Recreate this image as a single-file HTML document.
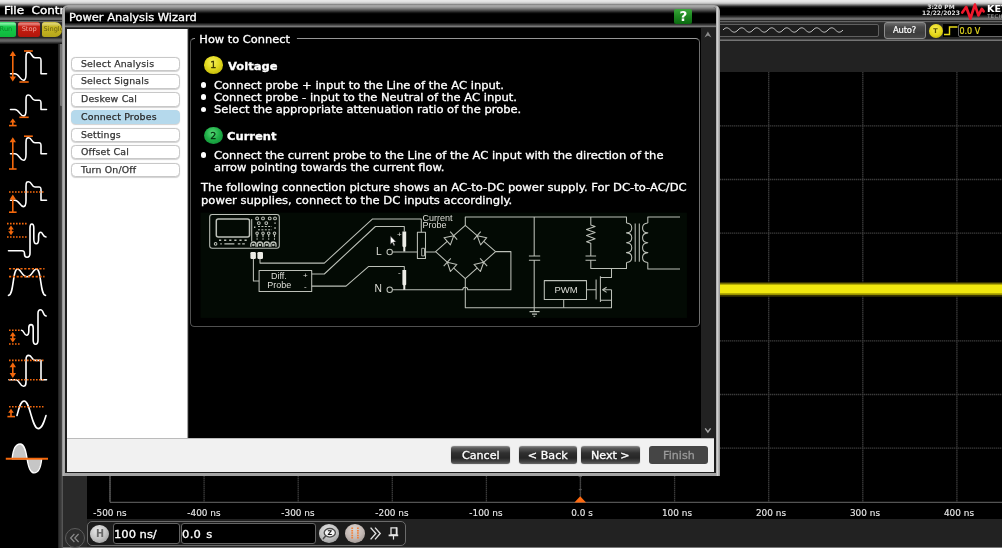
<!DOCTYPE html>
<html>
<head>
<meta charset="utf-8">
<title>Power Analysis Wizard</title>
<style>
html,body{margin:0;padding:0;}
body{width:1002px;height:548px;overflow:hidden;background:#000;position:relative;font-family:"DejaVu Sans","Liberation Sans",sans-serif;color:#fff;}
.abs{position:absolute;}
#app{position:absolute;left:0;top:0;width:1002px;height:548px;overflow:hidden;background:#000;filter:blur(0.55px);}
/* top chrome */
#topstrip{left:0;top:0;width:1002px;height:8px;background:linear-gradient(#ebebeb 0,#e0e0e0 2px,#bcbcbc 3.5px,#707070 5px,#262626 6.5px,#000 8px);}
#menubar{left:0;top:8px;width:1002px;height:13px;background:linear-gradient(#000 0,#000 6.5px,#2c2c2c 8.5px,#5e5e5e 10px,#7a7a7a 11px,#6a6a6a 11.6px,#2a2a2a 12.2px,#2a2a2a 13px);}
#menutext{-webkit-text-stroke:0.35px #fff;left:4px;top:3.8px;font-size:11px;transform:scaleX(1.087);transform-origin:0 0;line-height:14px;white-space:pre;color:#fff;}
#toolbar{left:0;top:21px;width:1002px;height:20.4px;background:linear-gradient(#5c5c5c 0,#6a6a6a 0.8px,#2c2c2c 1.6px,#262626 17px,#2a2a2a 18.2px,#747474 18.8px,#747474 19.8px,#333 20.4px);}
#subbar{left:62px;top:40px;width:940px;height:32px;background:#222;}
.tbtn{top:22.4px;height:15px;border-radius:2.5px;font-size:6.6px;line-height:15.4px;text-align:center;}
/* sidebar */
#sidebar{left:0;top:43px;width:59px;height:505px;background:#000;}
#sideedge{left:58.3px;top:41px;width:4.4px;height:507px;background:linear-gradient(90deg,#1c1c1c 0,#343434 1.5px,#3a3a3a 3px,#555 4.4px);}
/* plot */
#plot{left:87px;top:72px;width:915px;height:448px;background:#000;}
#leftpad{left:62px;top:40px;width:25px;height:508px;background:#2a2a2a;}
#bottombar{left:87px;top:519.3px;width:915px;height:28.7px;background:#222;}
.xl{-webkit-text-stroke:0.12px #e8e8e8;top:507px;width:60px;margin-left:-30.4px;text-align:center;font-size:8.2px;line-height:12px;color:#e8e8e8;transform:scaleX(1.087);}
/* dialog */
#dlgframe{left:62.3px;top:4.8px;width:657.4px;height:470.8px;border-radius:6px 6px 0 0;background:linear-gradient(90deg,#8c8c8c 0,#b0b0b0 1.5px,#a4a4a4 3px,#a4a4a4 654px,#d0d0d0 655.5px,#9a9a9a 657.4px);}
#dlgdark{left:65.2px;top:6.6px;width:651.3px;height:466.6px;border-radius:3px 3px 0 0;background:#1e1e1e;}
#dlg{left:63px;top:5px;width:656px;height:470px;}
#dlgtitle{left:2.2px;top:1.6px;width:651.3px;height:21.8px;background:linear-gradient(#9c9c9c 0,#8a8a8a 1px,#4a4a4a 3.5px,#0a0a0a 6px,#000 7px,#000 15.5px,#3a3a3a 17.6px,#7c7c7c 19.6px,#6e6e6e 20.2px,#1a1a1a 20.6px,#1a1a1a 21.8px);border-radius:3px 3px 0 0;}
#dlgtitletext{-webkit-text-stroke:0.3px #fff;left:6.1px;top:5.2px;font-size:10.5px;transform:scaleX(1.087);transform-origin:0 0;line-height:14px;color:#fff;white-space:nowrap;}
#dlgline{display:none;}
#white{left:4.3px;top:23.7px;width:119.7px;height:409.7px;background:#fff;border-right:1.6px solid #a8a8a8;}
#content{left:126px;top:23.4px;width:525.2px;height:410px;background:#000;}
#btnbar{left:4.3px;top:433px;width:646.9px;height:33.5px;background:#f1f1f1;border-top:1px solid #bbb;box-sizing:border-box;}
.nav{left:8.4px;width:108.3px;height:14.3px;border:1px solid #c8c8c8;border-radius:4.5px;background:#fff;color:#333;-webkit-text-stroke:0.25px #333;font-size:9.4px;letter-spacing:0.18px;line-height:12.3px;padding-left:8.6px;box-sizing:border-box;white-space:nowrap;box-shadow:0 0.5px 1px rgba(0,0,0,0.18);}
.nav.sel{background:#b5d9ec;border-color:#b5d9ec;color:#222;}
.wbtn{top:7.2px;width:59.3px;height:18px;border-radius:3px;background:linear-gradient(#909090 0,#5c5c5c 2px,#303030 7px,#262626 12px,#484848 16px,#6a6a6a 18px);color:#fff;font-size:10.5px;line-height:18.8px;text-align:center;box-shadow:0 0 1px #777;}
.wbtn span{display:inline-block;transform:scaleX(1.06);-webkit-text-stroke:0.3px currentColor;}
.wbtn.dis{background:#454545;color:#9a9a9a;box-shadow:none;}
.txt{-webkit-text-stroke:0.3px #fff;font-size:10.5px;transform:scaleX(1.096);transform-origin:0 0;line-height:12.3px;color:#fff;white-space:nowrap;}
.hf{top:523.3px;height:20.5px;box-sizing:border-box;border:1px solid #646464;border-radius:3px;background:#000;white-space:nowrap;}
.hf span{-webkit-text-stroke:0.3px #fff;position:absolute;left:-0.2px;top:1.3px;color:#fff;font-size:11px;line-height:18.5px;transform:scaleX(1.045);transform-origin:0 0;}
.bul{margin:-0.3px;width:5.6px;height:5.6px;border-radius:50%;background:#fff;}
</style>
</head>
<body>
<div id="app">
  <!-- PLOT -->
  <div id="plot" class="abs"></div>
<svg class="abs" id="grid" style="left:0;top:0" width="1002" height="548" viewBox="0 0 1002 548">
<g stroke="#3a3a3a" stroke-width="1.3" stroke-dasharray="1.4 0.6" fill="none">
<path d="M110.0 72V502"/>
<path d="M204.1 72V502"/>
<path d="M298.2 72V502"/>
<path d="M392.3 72V502"/>
<path d="M486.4 72V502"/>
<path d="M580.5 72V502"/>
<path d="M674.6 72V502"/>
<path d="M768.7 72V502"/>
<path d="M862.8 72V502"/>
<path d="M956.9 72V502"/>
<path d="M110 125.8H1002"/>
<path d="M110 179.5H1002"/>
<path d="M110 233.2H1002"/>
<path d="M110 287.0H1002"/>
<path d="M110 340.8H1002"/>
<path d="M110 394.5H1002"/>
<path d="M110 448.2H1002"/>
</g>
<path d="M110 72V502.3H1002" stroke="#686868" stroke-width="1" fill="none"/>
<path d="M87 71.5H1002" stroke="#444" stroke-width="1" fill="none"/>
<rect x="110" y="282.1" width="892" height="14.6" fill="#3a3600"/>
<rect x="110" y="283.4" width="892" height="11.6" fill="#9a9200"/>
<rect x="110" y="284.7" width="892" height="8.6" fill="#f0e70e"/>
<path d="M580.2 496.3 L586 502.4 H574.4Z" fill="#ff6a10"/>
<path d="M580.3 476V496" stroke="#444" stroke-width="1"/><path d="M578.6 476.6H582M578.8 489.6H581.8" stroke="#555" stroke-width="1"/>
</svg>
  <div class="abs xl" style="left:110.0px">-500 ns</div>
  <div class="abs xl" style="left:204.1px">-400 ns</div>
  <div class="abs xl" style="left:298.2px">-300 ns</div>
  <div class="abs xl" style="left:392.3px">-200 ns</div>
  <div class="abs xl" style="left:486.4px">-100 ns</div>
  <div class="abs xl" style="left:582.0px">0.0 s</div>
  <div class="abs xl" style="left:677.2px">100 ns</div>
  <div class="abs xl" style="left:771.3px">200 ns</div>
  <div class="abs xl" style="left:865.4px">300 ns</div>
  <div class="abs xl" style="left:959.5px">400 ns</div>
  <div id="leftpad" class="abs"></div>
  <div id="subbar" class="abs"></div>
  <div id="bottombar" class="abs"></div>
  <div class="abs" style="left:60px;top:546.6px;width:942px;height:1.4px;background:#7a7a7a;"></div>
  <div class="abs" id="hbox" style="left:86.6px;top:520.8px;width:319.4px;height:25.6px;box-sizing:border-box;border:1.3px solid #6a6a6a;border-radius:5px;background:#1c1c1c;"></div>
  <div class="abs" id="hcirc" style="left:90.4px;top:524.6px;width:19px;height:18.4px;border-radius:50%;background:radial-gradient(circle at 40% 30%,#e8e8e8 0,#c4c4c4 50%,#8c8c8c 100%);color:#6a6a6a;font-size:9.6px;font-weight:bold;line-height:18.6px;text-align:center;">H</div>
  <div class="abs hf" style="left:113.4px;width:66.4px;"><span>100 ns/</span></div>
  <div class="abs hf" style="left:181.4px;width:134.4px;"><span style="word-spacing:1px;letter-spacing:0.3px">0.0 s</span></div>
  <div class="abs" id="zcirc" style="left:319px;top:524.2px;width:20.2px;height:18.4px;border-radius:50%;background:radial-gradient(circle at 45% 30%,#e0e0e0 0,#c2c2c2 50%,#8a8a8a 100%);"></div>
  <svg class="abs" style="left:319px;top:523px" width="21" height="21" viewBox="0 0 21 21"><ellipse cx="10.8" cy="9.8" rx="5.6" ry="4.3" fill="#f4f4f4" stroke="#4a4a4a" stroke-width="1.3"/><path d="M6.6 13L4.4 15.6" stroke="#4a4a4a" stroke-width="1.5" stroke-linecap="round"/><text x="10.9" y="12.2" font-family="'DejaVu Sans',sans-serif" font-size="6.4px" font-weight="bold" fill="#111" text-anchor="middle">Z</text></svg>
  <div class="abs" id="pcirc" style="left:345.3px;top:524.2px;width:20px;height:18.4px;border-radius:50%;background:radial-gradient(circle at 45% 30%,#dcd4d0 0,#c4bab6 50%,#8e8682 100%);"></div>
  <svg class="abs" style="left:345.3px;top:523px" width="20" height="21" viewBox="0 0 20 21"><path d="M7.2 4.5V16.5M12.9 4.5V16.5" stroke="#f0803a" stroke-width="1.8" stroke-dasharray="1.5 0.9"/></svg>
  <svg class="abs" style="left:368px;top:525px" width="40" height="18" viewBox="0 0 40 18"><path d="M2.6 2.6L7.8 8.5L2.6 14.4M7 2.6L12.2 8.5L7 14.4" fill="none" stroke="#e0e0e0" stroke-width="1.4"/><path d="M23 2.8H28.6V10H23Z" fill="none" stroke="#e4e4e4" stroke-width="1.3"/><path d="M28.6 2.6V10M20.6 10.4H30.2" stroke="#e4e4e4" stroke-width="1.7"/><path d="M25.5 10.4V14.6" stroke="#e4e4e4" stroke-width="1.2"/></svg>
  <div class="abs" id="llcirc" style="left:65px;top:527.6px;width:20px;height:20px;box-sizing:border-box;border-radius:50%;border:1px solid #5c5c5c;background:#2c2c2c;"></div>
  <svg class="abs" style="left:65px;top:527.6px" width="20" height="20" viewBox="0 0 20 20"><path d="M9.4 6L5.6 10L9.4 14M13.6 6L9.8 10L13.6 14" fill="none" stroke="#8a8a8a" stroke-width="1.2"/></svg>
  <!-- SIDEBAR -->
  <div id="sidebar" class="abs"></div>
  <div id="sideedge" class="abs"></div>
  <div class="abs" style="left:60px;top:42.8px;width:2.7px;height:63px;background:#747474;border-radius:1px;"></div>
<svg class="abs" id="icons" style="left:0;top:40px" width="60" height="508" viewBox="0 40 60 508">
<g fill="none" stroke="#fff" stroke-width="1.6" stroke-linecap="round" stroke-linejoin="round">
<path d="M10.5 73.7 H15 C19 73.7 20 80.2 23.5 80.2 C26 80.2 26 77.2 26 74.2 V57.3 C26 52.3 27 52.3 28.5 52.3 C32 52.3 31.5 57.7 35 57.7 H39 C41 57.7 41 58.7 41 60.7 V73.7 H46.5"/>
<path d="M10.5 109.5 H15 C19 109.5 20 115.9 23.5 115.9 C26 115.9 26 112.9 26 109.9 V100 C26 95 27 95 28.5 95 C32 95 31.5 100.2 35 100.2 H39 C41 100.2 41 101.2 41 103.2 V109.5 H46.5"/>
<path d="M10.5 153.7 H15 C19 153.7 20 160.3 23.5 160.3 C26 160.3 26 157.3 26 154.3 V142.8 C26 137.8 27 137.8 28.5 137.8 C32 137.8 31.5 142.8 35 142.8 H39 C41 142.8 41 143.8 41 145.8 V153.7 H46.5"/>
<path d="M10.5 200.2 H15 C19 200.2 20 206.6 23.5 206.6 C26 206.6 26 203.6 26 200.6 V186.7 C26 181.7 27 181.7 28.5 181.7 C32 181.7 31.5 187 35 187 H39 C41 187 41 188 41 190 V200.2 H46.5"/>
<path d="M8.5 250.7 H22 C24.5 250.7 24.5 252 24.5 254 C24.5 256.5 25.5 257.3 27 257.3 C29 257.3 30 256.5 30 253 V228 C30 225 30.5 224 31.8 224 C33.2 224 33.8 225 33.8 228 V239 C33.8 242.5 34.8 243.7 36.3 243.7 C38 243.7 38.6 242.5 38.6 239 V236 C38.6 233 39.4 232.2 40.8 232.2 C42.8 232.2 42.6 237 46 237"/>
<path d="M8.5 295.4 C14 295.4 12.5 269 17.5 269 C21 269 22 276.8 27 276.8 C32 276.8 33 269 36.5 269 C41.5 269 40 295.4 45.5 295.4"/>
<path d="M21.5 330.3 C24 330.3 24 335.2 26.5 335.2 C28.6 335.2 28.8 333 28.8 331 V328 C28.8 325.5 29.6 324.6 31 324.6 C32.6 324.6 33.2 325.5 33.2 328 V340 C33.2 343 34 344.2 35.6 344.2 C37.4 344.2 38 343 38 340 V313.5 C38 310.5 38.8 309.8 40.5 309.8 C44 309.8 42.5 316 46.2 316"/>
<path d="M9 379.8 H16 C19.5 379.8 20 386.3 23.5 386.3 C26 386.3 26 384 26 381 V360 C26 356 27 355.4 28.8 355.4 C32 355.4 31.8 360.4 35 360.4 H41 V379.8 H46.5"/>
<path d="M17 415.5 C19 408 20.5 401 24.2 401 C30 401 32 428.6 38.2 428.6 C42 428.6 44 422 46 415.5"/>
</g>
<path d="M12.15 458.8 C12.9 450.5 15.6 444 20.1 444 C24.7 444 26.1 452 27.1 458.8 C28.1 465.6 29.5 472.9 34.1 472.9 C38.7 472.9 41 466.5 41.7 458.8Z" fill="#c6c6c6" stroke="#fff" stroke-width="1.3" stroke-linejoin="round"/>
<g stroke="#f4680c" stroke-width="1.6" fill="none">
<path d="M12.8 54V79"/><path d="M24 51H32.8"/><path d="M19.4 82H28.7"/>
<path d="M19.4 117.3H28.7"/><path d="M12.8 121V125.5"/><path d="M9 125.6H16.6"/>
<path d="M24 136.2H32.8"/><path d="M12.8 141V169"/><path d="M9 169H16.6"/>
<path d="M9 192H43.5" stroke-dasharray="1.6 1.4"/><path d="M12.8 199V212"/><path d="M9 212.2H16.6"/>
<path d="M7 223.6H27.5" stroke-dasharray="1.6 1.4"/><path d="M7 237H27.5" stroke-dasharray="1.6 1.4"/><path d="M11 228.5V232.5"/>
<path d="M9 268.8H44.5" stroke-dasharray="2.2 1.6"/><path d="M9 276.6H44.5" stroke-dasharray="2.2 1.6"/>
<path d="M9 330.3H20.5" stroke-dasharray="1.6 1.4"/><path d="M9 344H20.5" stroke-dasharray="1.6 1.4"/><path d="M12.8 335V340"/>
<path d="M9 360.4H43.5" stroke-dasharray="1.6 1.4"/><path d="M9 379.8H43.5" stroke-dasharray="1.6 1.4"/><path d="M12.8 366V375"/>
<path d="M9 406.8H43.5" stroke-dasharray="1.6 1.4"/><path d="M11 412V416"/><path d="M7.4 416.6H15"/>
<path d="M5.8 458.8H48" stroke-width="2"/>
</g>
<g fill="#f4680c" stroke="none">
<path d="M12.8 51 L16.0 56 H9.600000000000001Z"/><path d="M12.8 81.6 L16.0 76.6 H9.600000000000001Z"/>
<path d="M12.8 118.6 L15.8 122.6 H9.8Z"/>
<path d="M12.8 137.3 L16.0 142.3 H9.600000000000001Z"/>
<path d="M12.8 194.6 L16.0 199.6 H9.600000000000001Z"/>
<path d="M11 225.6 L13.8 229.6 H8.2Z"/><path d="M11 235.2 L13.8 231.2 H8.2Z"/>
<path d="M12.8 332 L15.8 336.2 H9.8Z"/><path d="M12.8 342.4 L15.8 338.2 H9.8Z"/>
<path d="M12.8 362.2 L16.0 367.2 H9.600000000000001Z"/><path d="M12.8 378 L16.0 373 H9.600000000000001Z"/>
<path d="M11 408.8 L13.8 412.8 H8.2Z"/>
</g>
</svg>
  <!-- TOP -->
  <div id="topstrip" class="abs"></div>
  <div id="menubar" class="abs"></div>
  <div id="menutext" class="abs">File  Control</div>
  <div id="toolbar" class="abs"></div>
  <div class="abs tbtn" style="left:-8px;width:23.7px;background:linear-gradient(#30d060 0,#7cf0a0 1.5px,#58e484 3px,#1cd050 4.2px,#12c444 9px,#10b83c 15px);color:#0a8a2a;">&nbsp;&nbsp;Run</div>
  <div class="abs tbtn" style="left:18px;width:22.4px;background:linear-gradient(#c83428 0,#e47c74 1.5px,#dc6860 3px,#c82418 4.2px,#c01a0e 9px,#b0160c 15px);color:#f0a49c;">Stop</div>
  <div class="abs tbtn" style="left:42.1px;width:20.4px;overflow:hidden;text-align:left;text-indent:1.4px;white-space:nowrap;background:linear-gradient(#c8ba34 0,#dcd270 1.5px,#d4c858 3px,#c8b828 4.2px,#c2b220 9px,#b4a41a 15px);color:#6a6012;border-radius:2.5px 7px 7px 2.5px;">Single</div>
  <div class="abs" style="left:0;top:38.4px;width:62.5px;height:5.2px;background:linear-gradient(#2e2e2e 0,#5c5c5c 1.2px,#646464 2.5px,#555 3.8px,#1c1c1c 5.2px);"></div>
  <!-- right toolbar -->
  <div class="abs" style="left:700px;top:23.6px;width:178.6px;height:13.8px;box-sizing:border-box;border:1.2px solid #606060;background:#1e1e1e;border-radius:2px;"></div>
  <svg class="abs" style="left:722px;top:22px" width="130" height="16" viewBox="0 0 130 16"><path id="sq" d="M1 8 C3.73 5.10 5.77 5.10 8.50 8 C11.23 10.90 13.27 10.90 16.00 8 C18.73 5.10 20.77 5.10 23.50 8 C26.23 10.90 28.27 10.90 31.00 8 C33.73 5.10 35.77 5.10 38.50 8 C41.23 10.90 43.27 10.90 46.00 8 C48.73 5.10 50.77 5.10 53.50 8 C56.23 10.90 58.27 10.90 61.00 8 C63.73 5.10 65.77 5.10 68.50 8 C71.23 10.90 73.27 10.90 76.00 8 C78.73 5.10 80.77 5.10 83.50 8 C86.23 10.90 88.27 10.90 91.00 8 C93.73 5.10 95.77 5.10 98.50 8 C101.23 10.90 103.27 10.90 106.00 8 C108.73 5.10 110.77 5.10 113.50 8 C116.23 10.90 118.27 10.90 121.00 8" fill="none" stroke="#c8c8c8" stroke-width="1"/></svg>
  <div class="abs" id="auto" style="left:883.5px;top:22px;width:42px;height:16.5px;box-sizing:border-box;border:1px solid #8c8c8c;border-radius:3px;background:linear-gradient(#6e6e6e 0,#4a4a4a 4px,#3c3c3c 10px,#484848 15px);color:#fff;-webkit-text-stroke:0.2px #fff;font-size:8.4px;line-height:14px;text-align:center;letter-spacing:-0.2px;">Auto?</div>
  <div class="abs" id="tcirc" style="left:928.5px;top:23.5px;width:14px;height:14px;border-radius:50%;background:radial-gradient(circle at 45% 35%,#f8ee50 0,#e4d618 55%,#b4a808 100%);color:#5a5200;font-size:6.5px;font-weight:bold;line-height:14px;text-align:center;">T</div>
  <div class="abs" style="left:943px;top:24px;width:16px;height:13px;background:#000;"></div>
  <svg class="abs" style="left:943px;top:24px" width="16" height="13" viewBox="0 0 16 13"><path d="M1 10.5H6.5V3H14.5" fill="none" stroke="#e8dc18" stroke-width="1.4"/></svg>
  <div class="abs" style="left:958.4px;top:23.6px;width:50px;height:13.4px;border:1px solid #6a6a6a;border-radius:2px;background:#000;color:#e4d820;-webkit-text-stroke:0.2px #e4d820;font-size:8px;line-height:13px;padding-left:0;box-sizing:border-box;">0.0 V</div>
  <!-- clock + logo -->
  <div class="abs" style="left:911px;top:4.3px;width:60px;text-align:center;font-size:6px;line-height:5.9px;font-weight:bold;color:#e0e0e0;white-space:pre;">3:20 PM
12/22/2023</div>
  <svg class="abs" style="left:958px;top:0" width="30" height="24" viewBox="958 0 30 24"><path d="M962.3 12.6 L966.2 7 L970.4 18.6 L974.9 4.6 L978.4 15.4 L981.8 8.9 L983.6 11.3" fill="none" stroke="#f0182c" stroke-width="2.7" stroke-linejoin="round" stroke-linecap="round"/></svg>
  <div class="abs" style="left:986.6px;top:3.6px;font-size:8.6px;line-height:10px;font-weight:bold;color:#fff;white-space:nowrap;transform:scaleX(1.12);transform-origin:0 0;">KEYSIGHT</div>
  <div class="abs" style="left:987.3px;top:13.2px;font-size:5.2px;line-height:6px;color:#b0b0b0;white-space:nowrap;letter-spacing:0.35px;">TECHNOLOGIES</div>
  <!-- DIALOG -->
  <div id="dlgframe" class="abs"></div>
  <div id="dlgdark" class="abs"></div>
  <div id="dlg" class="abs">
    <div id="dlgtitle" class="abs"></div>
    <div id="dlgtitletext" class="abs">Power Analysis Wizard</div>
    <div id="dlgline" class="abs"></div>
    <div id="white" class="abs"></div>
    <div class="abs nav" style="top:51.5px">Select Analysis</div>
    <div class="abs nav" style="top:69.4px">Select Signals</div>
    <div class="abs nav" style="top:87.3px">Deskew Cal</div>
    <div class="abs nav sel" style="top:104.9px">Connect Probes</div>
    <div class="abs nav" style="top:122.5px">Settings</div>
    <div class="abs nav" style="top:140.2px">Offset Cal</div>
    <div class="abs nav" style="top:158.0px">Turn On/Off</div>
    <div id="content" class="abs">
      <!-- group box; coords relative to content (189,28) -->
      <div class="abs" id="gbox" style="left:0.9px;top:10px;width:510.4px;height:288.6px;border:1.2px solid #505050;border-top-color:#969696;border-right-color:#707070;border-radius:4.5px;box-sizing:border-box;"></div>
      <div class="abs txt" id="gtitle" style="left:6px;top:4px;transform:scaleX(1.084);padding:0 6px 0 4px;background:#000;line-height:14px;">How to Connect</div>
      <div class="abs" id="c1" style="left:14.9px;top:27.9px;width:19px;height:17.4px;border-radius:50%;background:radial-gradient(circle at 45% 35%,#f6f05a 0,#e2d81e 45%,#b0a800 100%);color:#3a3400;-webkit-text-stroke:0.3px #3a3400;font-size:9.5px;line-height:17.4px;text-align:center;">1</div>
      <div class="abs txt" style="left:38.6px;top:31.8px;font-weight:bold;">Voltage</div>
      <div class="abs bul" style="left:12px;top:54px"></div>
      <div class="abs bul" style="left:12px;top:66.3px"></div>
      <div class="abs bul" style="left:12px;top:78.6px"></div>
      <div class="abs txt" style="left:24.8px;top:50.5px">Connect probe + input to the Line of the AC input.<br>Connect probe - input to the Neutral of the AC input.<br>Select the appropriate attenuation ratio of the probe.</div>
      <div class="abs" id="c2" style="left:14.9px;top:98.2px;width:19px;height:17.4px;border-radius:50%;background:radial-gradient(circle at 45% 35%,#58d878 0,#20b048 45%,#0a8030 100%);color:#04300e;-webkit-text-stroke:0.3px #04300e;font-size:9.5px;line-height:17.4px;text-align:center;">2</div>
      <div class="abs txt" style="left:37.8px;top:101.3px;font-weight:bold;">Current</div>
      <div class="abs bul" style="left:12px;top:124px"></div>
      <div class="abs txt" style="left:24.8px;top:120.6px;line-height:12.5px">Connect the current probe to the Line of the AC input with the direction of the<br>arrow pointing towards the current flow.</div>
      <div class="abs txt" style="left:12.2px;top:152.7px;line-height:12.6px;transform:scaleX(1.1026)">The following connection picture shows an AC-to-DC power supply. For DC-to-AC/DC<br>power supplies, connect to the DC inputs accordingly.</div>
<svg class="abs" id="circuit" style="left:-189px;top:-28.4px" width="1002" height="548" viewBox="0 0 1002 548">
<rect x="200.6" y="212.7" width="486.3" height="105.2" fill="#030a04"/>
<g fill="none" stroke="#bcc0b8" stroke-width="1.05" stroke-linejoin="round">
<rect x="209.7" y="214.4" width="69.6" height="33.9" rx="2.5"/>
<rect x="216.3" y="218.9" width="33.2" height="18" rx="2" stroke-width="1.5"/>
<path d="M251.7 219V241.5"/>
<path d="M219 240.2H248" stroke-dasharray="2.2 2.9" stroke-width="1.6"/>
<circle cx="215.6" cy="243.9" r="1.3"/><path d="M220.3 243.9H221.8M224.4 243.9H234.4M237.8 243.9H240.4M242.2 243.9H244.8" stroke-width="1.3"/>
<circle cx="257.1" cy="218.4" r="1.4"/>
<circle cx="263" cy="218.4" r="1.4"/>
<circle cx="269.7" cy="218.4" r="1.4"/>
<circle cx="275" cy="218.4" r="1.4"/>
<circle cx="258.8" cy="223.1" r="1.4"/>
<circle cx="266.3" cy="223.1" r="1.4"/>
<path d="M274.3 223.1H275.8M254 227.3H255.4M274.3 228H275.8" stroke-width="1.4"/>
<path d="M258 226.5H272M258 229.8H272" stroke-dasharray="2 1.4" stroke-width="1"/>
<circle cx="257.1" cy="233.2" r="1.3"/><path d="M257.1 234.6V237.2M257.1 238.3V239.8" stroke-width="1.1"/>
<circle cx="263" cy="233.2" r="1.3"/><path d="M263 234.6V237.2M263 238.3V239.8" stroke-width="1.1"/>
<circle cx="268.7" cy="233.2" r="1.3"/><path d="M268.7 234.6V237.2M268.7 238.3V239.8" stroke-width="1.1"/>
<circle cx="274.5" cy="233.2" r="1.3"/><path d="M274.5 234.6V237.2M274.5 238.3V239.8" stroke-width="1.1"/>
<path d="M250.8 246.8V244.6A2.6 2.6 0 0 1 256.0 244.6V246.8" stroke-width="1.3"/><circle cx="253.4" cy="245" r="0.7" fill="#c6cac2"/>
<path d="M257.4 246.8V244.6A2.6 2.6 0 0 1 262.6 244.6V246.8" stroke-width="1.3"/><circle cx="260" cy="245" r="0.7" fill="#c6cac2"/>
<path d="M264.09999999999997 246.8V244.6A2.6 2.6 0 0 1 269.3 244.6V246.8" stroke-width="1.3"/><circle cx="266.7" cy="245" r="0.7" fill="#c6cac2"/>
<path d="M270.79999999999995 246.8V244.6A2.6 2.6 0 0 1 276.0 244.6V246.8" stroke-width="1.3"/><circle cx="273.4" cy="245" r="0.7" fill="#c6cac2"/>
<path d="M253.4 259V281H259.1"/>
<path d="M260 259V263.1H324.3L372.6 218.9H421.3V232.3"/>
<rect x="259.1" y="270.5" width="52.6" height="21"/>
<path d="M311.7 274H324.3L375.4 226.5H404.3V231.5"/>
<path d="M311.7 286.1H346L368.7 266.4H404.3V270.1"/>
<circle cx="389.7" cy="252" r="2.7"/><circle cx="389.7" cy="289.8" r="2.7"/>
<path d="M392.4 252H417.4M425.5 252H435.6"/>
<path d="M392.4 289.8H462.8A2.5 2.5 0 0 1 467.8 289.8H510.9V251.6H495.6"/>
<rect x="417.4" y="232.3" width="8.1" height="26.1"/>
<rect x="421.7" y="248.3" width="2.8" height="7.6" stroke-width="0.9"/>
<path d="M435.6 251.6L465.3 225.4L495.6 251.6L465.3 278.6Z"/>
<path d="M465.3 225.4V217H626.5V223"/>
<path d="M465.3 278.6V307.7H611.5V289.8"/>
<path d="M453.7 235.7L450.4 244.9L444.0 237.7Z" fill="#030a04"/><path d="M457.2 239.6L450.2 231.7"/>
<path d="M477.2 235.7L486.8 237.7L480.6 244.9Z" fill="#030a04"/><path d="M480.7 231.7L473.7 239.7"/>
<path d="M447.3 262.2L456.9 264.4L450.4 271.5Z" fill="#030a04"/><path d="M450.8 258.3L443.7 266.1"/>
<path d="M483.7 262.2L480.4 271.5L474.0 264.4Z" fill="#030a04"/><path d="M487.2 266.2L480.1 258.3"/>
<path d="M534.2 217V256M528.9 256H540.2M528.9 260.3H540.2M534.2 260.3V311.6M529.5 311.6H539.6M532 314.1H537M533.5 316.3H535.2"/>
<path d="M590.8 217V225L595.1 226.5L586.5 229.6L595.1 232.6L586.5 235.6L595.1 238.7L586.5 241.7L590.8 243.2V256M585.5 256H596.1M585.5 260.3H596.1M590.8 260.3V268.4H626.5V262.5"/>
<path d="M626.5 223C633.5 223.50 633.5 232.38 626.5 232.88C633.5 233.38 633.5 242.25 626.5 242.75C633.5 243.25 633.5 252.12 626.5 252.62C633.5 253.12 633.5 262.00 626.5 262.50"/><path d="M647.8 223C640.8 223.50 640.8 232.38 647.8 232.88C640.8 233.38 640.8 242.25 647.8 242.75C640.8 243.25 640.8 252.12 647.8 252.62C640.8 253.12 640.8 262.00 647.8 262.50"/>
<path d="M635.2 223.4V261.8M639.3 223.4V261.8"/>
<path d="M647.8 223V217H680M647.8 262.5V268.9H680"/>
<path d="M611.5 268.4V277.4H600.4M600.4 276.3V302M596.1 279.5V299.4M586.5 289.8H596.1M600.4 300.2H611.5M611.5 289.8H603"/>
<path d="M606.6 287.2L602.6 289.8L606.6 292.4"/>
<rect x="544.3" y="280.6" width="42.2" height="18.8"/><path d="M563.7 299.4V307.7"/>
</g>
<g fill="#ecece6" stroke="none">
<rect x="250.4" y="252" width="5.5" height="7" rx="1.2"/><rect x="257.4" y="252" width="5.6" height="7" rx="1.2"/>
<path d="M402.4 231.5H406.2V246.3L405.3 247.3V251.4H403.3V247.3L402.4 246.3Z"/>
<path d="M402.4 270.1H406.2V284.4L405.3 285.4V289.8H403.3V285.4L402.4 284.4Z"/>
</g>
<g fill="#deded8" font-family="'Liberation Sans',sans-serif" font-size="9px">
<text x="278.9" y="279.4" text-anchor="middle">Diff.</text>
<text x="279.3" y="288.3" text-anchor="middle">Probe</text>
<text x="305.3" y="277.6" text-anchor="middle" font-size="8px">+</text>
<text x="305.3" y="288.6" text-anchor="middle" font-size="8px">-</text>
<text x="399.4" y="236.8" text-anchor="middle" font-size="8px">+</text>
<text x="399.4" y="274.8" text-anchor="middle" font-size="8px">-</text>
<text x="376" y="255.4" font-size="10.3px">L</text>
<text x="374.6" y="291.8" font-size="10.3px">N</text>
<text x="422.6" y="220.6">Current</text>
<text x="422.6" y="228">Probe</text>
<text x="566" y="293.4" text-anchor="middle" font-size="9.5px">PWM</text>
</g>
<path d="M390.3 235.8V244.4L392.3 242.6L393.8 245.9L395.1 245.3L393.6 242.1H396.3Z" fill="#fff" stroke="#111" stroke-width="0.6"/>
</svg>
      <!-- scrollbar -->
      <div class="abs" id="sb" style="left:511.5px;top:0;width:15px;height:410px;background:#222;"></div>
      <svg class="abs" style="left:511.5px;top:0" width="15" height="410" viewBox="0 0 15 410"><path d="M3.4 9.4 L6.9 3.6 L10.4 9.4 L6.9 7.4Z" fill="#8a8a8a"/><path d="M4.2 400.4 L6.9 404 L9.6 400.4" fill="none" stroke="#a8a8a8" stroke-width="1.4"/></svg>
    </div>
    <div id="btnbar" class="abs">
      <div class="abs wbtn" style="left:383.8px"><span>Cancel</span></div>
      <div class="abs wbtn" style="left:451.8px;width:58.4px"><span>&lt; Back</span></div>
      <div class="abs wbtn" style="left:513.8px"><span>Next &gt;</span></div>
      <div class="abs wbtn dis" style="left:581.8px;width:58.8px"><span>Finish</span></div>
    </div>
    <div class="abs" id="help" style="left:611.3px;top:4px;width:18.2px;height:14.5px;border-radius:2px;background:linear-gradient(#3aa63a 0,#1f8a22 45%,#0a6a10 100%);color:#fff;font-weight:bold;font-size:13.5px;line-height:15.4px;text-align:center;">?</div>
  </div>
</div>
</body>
</html>
